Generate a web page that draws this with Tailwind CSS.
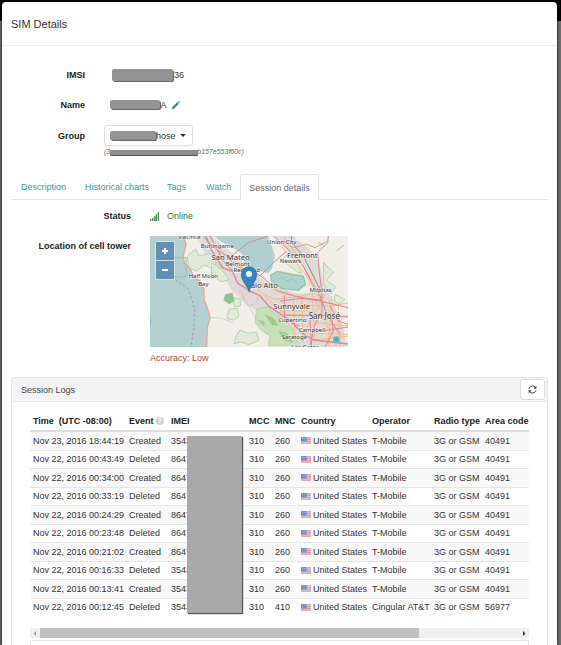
<!DOCTYPE html>
<html lang="en">
<head>
<meta charset="utf-8">
<meta name="viewport" content="width=device-width, initial-scale=1">
<title>SIM Details</title>
<script src="https://cdn.jsdelivr.net/npm/@tailwindcss/browser@4"></script>
</head>
<body class="h-screen overflow-hidden bg-[#666] bg-linear-to-b from-black from-[21px] to-[#6e6e6e] to-[21px] pl-[2px] pr-[4px] pt-[2px] font-['Liberation_Sans',Arial,sans-serif] text-[9px] leading-3 text-[#333]">
<svg class="hidden" aria-hidden="true">
  <symbol id="flag" viewBox="0 0 30 20">
    <rect width="30" height="20" fill="#f4c3c3"/>
    <path d="M0 1.500h30M0 7h30M0 12.500h30M0 18h30" stroke="#ee9091" stroke-width="2.800"/>
    <rect width="17" height="13" fill="#5f8fe6"/>
    <path d="M3 4h2M8 4h2M13 4h2M5 8h2M10 8h2" stroke="#a9c6f7" stroke-width="2"/>
  </symbol>
</svg>
<main role="dialog" aria-labelledby="title" class="flex h-full flex-col rounded-t-[4px] bg-white shadow-[0_0_3px_#000]">
  <header class="flex h-11 shrink-0 items-center border-b border-[#ececec] px-[9px]">
    <h1 id="title" class="text-[11px] leading-4">SIM Details</h1>
  </header>

  <div class="flex flex-1 flex-col px-[9px] pt-[21px]">
    <dl class="grid grid-cols-[74px_1fr] gap-x-[19px]">
      <dt class="flex h-[15px] items-center justify-end font-bold text-[#222]">IMSI</dt>
      <dd class="flex h-[15px] items-center pl-2">
        <span class="z-10 h-3 w-[61px] rounded-[2px] bg-[#939393] shadow-[1px_1px_0_#666]"></span><span class="-ml-[4px]">536</span>
      </dd>
      <dt class="mt-[15px] flex h-[15px] items-center justify-end font-bold text-[#222]">Name</dt>
      <dd class="mt-[15px] flex h-[15px] items-center pl-1.5">
        <span class="z-10 h-[9px] w-[50px] rounded-[2px] bg-[#939393] shadow-[1px_1px_0_#666]"></span><span class="-ml-[2px]">IA</span>
        <button type="button" aria-label="Edit name" class="ml-1">
          <svg class="block size-[10px]" viewBox="0 0 30 30" fill="#2a9cab"><path d="M2 28l2-7L19 6l5 5L9 26z M21 4l3-2 4 4-2 3z"/></svg>
        </button>
      </dd>
      <dt class="mt-[13px] flex h-[21px] items-center justify-end font-bold text-[#222]">Group</dt>
      <dd class="mt-[13px]">
        <button type="button" class="flex h-[21px] w-[89px] items-center rounded-[3px] border border-[#ddd] pl-[5px]">
          <span class="z-10 h-[9px] w-[46px] rounded-[2px] bg-[#939393] shadow-[1px_1px_0_#666]"></span><span class="-ml-[5px]">_</span><span>hose</span>
          <svg class="ml-1 h-[3px] w-[6px]" viewBox="0 0 6 3"><path d="M0 0h6L3 3z" fill="#333"/></svg>
        </button>
        <p class="flex h-3 items-center text-[7px] italic text-[#666]"><span>(3</span><span class="z-10 h-[5px] w-[88px] rounded-[1px] bg-[#8c8c8c] shadow-[0_1px_0_#555]"></span><span class="-ml-px">b157e553f60c)</span></p>
      </dd>
    </dl>

    <nav class="mt-4 flex h-[26px] items-stretch border-b border-[#e4e4e4] pl-px text-[#2a9fa6]">
      <a href="#description" class="mr-px flex items-center px-[9px]">Description</a>
      <a href="#charts" class="flex items-center px-[9px]">Historical charts</a>
      <a href="#tags" class="mr-[2px] flex items-center px-[9px]">Tags</a>
      <a href="#watch" class="flex items-center px-[9px]">Watch</a>
      <a href="#session" aria-current="page" class="-mb-px flex items-center rounded-t-[3px] border border-b-0 border-[#e4e4e4] bg-white px-2 text-[#666]">Session details</a>
    </nav>

    <dl class="grid grid-cols-[120px_1fr] gap-x-[19px] pt-[10px]">
      <dt class="text-right font-bold text-[#222]">Status</dt>
      <dd class="flex items-center text-[#3c763d]">
        <svg class="mr-2 h-[9px] w-[9px]" viewBox="0 0 27 27" fill="#4d8a4e"><path d="M0 22h4v5H0zM6 18h4v9H6zM12 13h4v14h-4zM17 7h4v20h-4zM23 0h4v27h-4z"/></svg>Online
      </dd>
      <dt class="mt-[18px] text-right font-bold text-[#222]">Location of cell tower</dt>
      <dd class="mt-[14px]">
        <div class="relative h-[111px] w-[198px] overflow-hidden">
          <svg class="block h-full w-full" viewBox="0 0 594 333" preserveAspectRatio="xMidYMid slice" role="img" aria-label="Map of the San Francisco Bay Area">
            <rect width="594" height="333" fill="#b5d0d0"/>
            <path d="M102 0L108 25 100 60 103 82 118 95 130 118 150 135 162 160 162 190 172 215 180 245 172 275 170 333H594V0z" fill="#f2efe9"/>
            <!-- urban areas -->
            <path d="M140 0h45l30 25 35 28 48 40 35 35 50 25 60 20 50-5 30-30 30 70 25 60 20 110H470l-25-35-30-40-60-50-60-45-50-45-28-50-40-35z" fill="#dfdad8"/>
            <path d="M375 0h50l50 35 35 50 12 70-30 10-25-60-50-55z" fill="#dfdad8"/>
            <!-- forests and parks -->
            <g fill="#e1ead8" stroke="#aed6b0" stroke-width="3">
              <path d="M112 60l25-22 10 22 35-8 20 25-15 20-25-10-22 18-25-10z"/>
              <path d="M185 80l30 20 22 30-22 8-30-22z"/>
              <path d="M232 240l5-20 25-3 5 23-14 12-22-4z"/>
              <path d="M250 200l5-15 18 5-2 20-18 2z"/>
              <path d="M258 300l12-18 25 10 25-4 6 26-30 12-22-8-22 5z"/>
              <path d="M320 220l30-8 30 25 25 12 22 30 20 50H355l5-30-25-15-20-25z" fill="#c8dfb8"/>
              <path d="M395 70l20-15 25 22 15 35-15-5-25-20z"/>
              <path d="M520 80l30 28-20 25 28 20-15 22-22-30z"/>
              <path d="M555 175l30 15-15 15-18-10z"/>
            </g>
            <path d="M226 175l22-5 5 25-15 10-18-12z" fill="#8dc38c"/>
            <path d="M345 235l25 10 15 25-20-3zM385 285l25 5 20 30-30-8zM325 250l20 8-5 12z" fill="#9ccb8d"/>
            <path d="M58 65h50v58H58z" fill="none" stroke="#8dc3aa" stroke-width="3"/>
            <!-- bay and salt ponds -->
            <path d="M192 0H355l10 30 10 28-8 36-12 18-40-10-32-22-8-28-40-25-22-10z" fill="#b0cfd0"/>
            <path d="M362 118l20-12 38 8 40 6 7 25-22 18-50-6-30-20z" fill="#aed2ce" stroke="#8fc7a4" stroke-width="4"/>
            <path d="M385 130l12-8 10 14 20-8 14 14M505 20l15 8M560 45l22-18" fill="none" stroke="#95c5bb" stroke-width="3"/>
            <!-- minor roads -->
            <g fill="none" stroke="#c4bfbc" stroke-width="2">
              <path d="M180 245l30 0 40 15M270 160l20 40 30 50 35 25"/>
              <path d="M285 175a22 20 0 1 0 1-1M400 0l30 40 35 60 15 50"/>
              <path d="M180 0l40 75 28 30M425 0l0 20 35 40 55 110" stroke="#8f8b8b" stroke-width="3"/>
            </g>
            <!-- secondary roads -->
            <g fill="none" stroke="#f6bd84" stroke-width="3">
              <path d="M180 10l45 45 60 45 45 40 60 30 60 15 110 20M205 55l-10 25 45 25M375 0l30 45 50 55 40 60 30 60 50 90M320 145l10 25 45 20 80-10 60-15M345 180l60 55 95 5 94 0M400 205l150 5 44-10M395 225l80 0 50 15M430 180l5 120M455 180l5 140M485 160l10 160M545 180l-10 150M565 200l5 133M500 260l94 10M450 290l144 5M470 315l124-15M490 180l70 150M525 175l-70 130M410 10l110 180"/>
              <path d="M400 15l30 20 40-10 25 10 35-18" stroke="#cba679"/>
              <path d="M100 0l8 25-8 35 3 22 15 13 12 23 20 17 12 25 0 30 10 25 8 30-8 30-2 58" stroke="#f3a28e" stroke-width="4"/>
            </g>
            <!-- highways -->
            <g fill="none" stroke="#e67f95" stroke-width="3">
              <path d="M160 0l25 30 45 30 25 30 50 15 35 20 45 40 50 15 95 20 64 15"/>
              <path d="M168 0l15 40 35 55 30 12 15 35 40 25 25 10 30 35 60 40 45 45 30 15 101 12" stroke-width="4"/>
              <path d="M250 55l45-35 60-20M330 120l40-40 40-35M370 0l45 40 45 50 25 50 25 40 20 55 40 60"/>
              <path d="M535 0l-2 20-30 30 5 60 8 60 0 60M403 178v70l45 22M390 195l65-8 60 5M405 238h110l79 5M480 250l5 80M515 230l-20 35-15 65M540 210l25 45 29 10M518 285l76-12M545 245l5 40-25 48"/>
            </g>
            <g fill="none" stroke="#a793c0" stroke-width="3" stroke-dasharray="8 6"><path d="M76 132l38 25 20 60-3 60-8 56"/></g>
            <path d="M0 245q6 12 0 24z" fill="#a99bd0"/>
            <circle cx="559" cy="311" r="10" fill="#58bec9"/><circle cx="559" cy="311" r="4" fill="#3c9fb0"/>
            <!-- place names -->
            <g font-family="'Noto Sans', 'Open Sans', sans-serif" fill="#333" stroke="#fff" stroke-opacity=".6" stroke-width="4" paint-order="stroke" text-anchor="middle" font-size="18">
              <text x="119" y="10">Pacifica</text><text x="202" y="35">Burlingame</text>
              <text x="242" y="71" font-size="23">San Mateo</text><text x="263" y="89">Belmont</text>
              <text x="290" y="107">Redwood</text><text x="160" y="126">Half Moon</text><text x="160" y="151">Bay</text>
              <text x="336" y="157" font-size="23">Palo Alto</text><text x="395" y="24">Union City</text>
              <text x="457" y="67" font-size="23">Fremont</text><text x="422" y="82">Newark</text>
              <text x="512" y="168">Milpitas</text><text x="425" y="220" font-size="23">Sunnyvale</text>
              <text x="427" y="257">Cupertino</text><text x="523" y="249" font-size="24">San José</text>
              <text x="486" y="287">Campbell</text><text x="433" y="308">Saratoga</text><text x="466" y="340">Los Gatos</text>
            </g>
            <!-- marker -->
            <path d="M297 167C291 146 274 137 274 115a23 23 0 0 1 46 0C320 137 303 146 297 167z" fill="#3583bf" stroke="#2b6ea5" stroke-width="2"/>
            <circle cx="297" cy="114" r="9" fill="#fff"/>
          </svg>
          <div class="absolute left-[5px] top-[5px] flex flex-col gap-px rounded-[2px] bg-white/40 p-px">
            <button type="button" aria-label="Zoom in" class="grid h-[18px] w-[18px] place-items-center rounded-t-[1px] bg-[#648eb5]"><svg class="size-2" viewBox="0 0 8 8"><path d="M4 1v6M1 4h6" stroke="#fff" stroke-width="2"/></svg></button>
            <button type="button" aria-label="Zoom out" class="grid h-[18px] w-[18px] place-items-center rounded-b-[1px] bg-[#648eb5]"><svg class="size-2" viewBox="0 0 8 8"><path d="M1 4h6" stroke="#fff" stroke-width="2"/></svg></button>
          </div>
        </div>
        <p class="mt-[5px] text-[#b04442]">Accuracy: Low</p>
      </dd>
    </dl>

    <section class="mt-[13px] flex flex-1 flex-col rounded-t-[3px] border border-b-0 border-[#e4e4e4]">
      <header class="flex h-6 items-center justify-between border-b border-[#e4e4e4] bg-[#f4f4f4] pl-[9px] pr-[2px]">
        <h2 class="text-[#444]">Session Logs</h2>
        <button type="button" aria-label="Refresh" class="grid h-[21px] w-[25px] place-items-center rounded-[3px] border border-[#ddd] bg-white">
          <svg class="size-[9px]" viewBox="0 0 27 27" fill="none" stroke="#333" stroke-width="3"><path d="M3 11C5 5 9 3 14 3c4 0 7 2 9 5M24 16c-2 6-6 8-11 8-4 0-7-2-9-5"/><path d="M25 2v9h-9zM2 25v-9h9z" fill="#333" stroke="none"/></svg>
        </button>
      </header>
      <div class="flex flex-1 flex-col px-[18px] pt-[9px]">
        <div class="relative">
          <table class="w-full table-fixed border-collapse whitespace-nowrap text-left">
            <colgroup><col class="w-[96px]"><col class="w-[42px]"><col class="w-[78px]"><col class="w-[26px]"><col class="w-[26px]"><col class="w-[71px]"><col class="w-[62px]"><col class="w-[51px]"><col></colgroup>
            <thead>
              <tr class="h-5 border-b-2 border-[#ddd] text-[#222]">
                <th class="pl-[3px]">Time &nbsp;(UTC -08:00)</th>
                <th class="pl-[3px]"><span class="flex items-center gap-[2px]">Event<span class="grid size-2 place-items-center rounded-full bg-[#d2d2d2] text-[7px] leading-none text-white">?</span></span></th>
                <th class="pl-[3px]">IMEI</th><th class="pl-[3px]">MCC</th><th class="pl-[3px]">MNC</th><th class="pl-[3px]">Country</th><th class="pl-[3px]">Operator</th><th class="pl-[3px]">Radio type</th><th class="pl-[3px]">Area code</th>
              </tr>
            </thead>
            <tbody id="logs"></tbody>
          </table>
          <div class="absolute bottom-[3px] left-[157px] top-[25px] w-[55px] bg-[#a8a8a8] shadow-[1px_1px_1px_#555]"></div>
        </div>
        <div class="mt-3 flex h-[10px] items-center bg-[#f0f0f0]">
          <svg class="h-[5px] w-[10px]" viewBox="0 0 10 5"><path d="M6 0v5L3.500 2.500z" fill="#999"/></svg>
          <div class="h-full w-[76%] bg-[#c0c0c0]"></div>
          <svg class="ml-auto h-[5px] w-[10px]" viewBox="0 0 10 5"><path d="M4 0v5L6.500 2.500z" fill="#333"/></svg>
        </div>
        <div class="mt-[2px] flex-1 border border-b-0 border-[#e8e8e8]"></div>
      </div>
    </section>
  </div>
</main>
<script>
const logs = [
  ["Nov 23, 2016 18:44:19", "Created", "3543", "310", "260", "T-Mobile", "40491"],
  ["Nov 22, 2016 00:43:49", "Deleted", "8647", "310", "260", "T-Mobile", "40491"],
  ["Nov 22, 2016 00:34:00", "Created", "8647", "310", "260", "T-Mobile", "40491"],
  ["Nov 22, 2016 00:33:19", "Deleted", "8647", "310", "260", "T-Mobile", "40491"],
  ["Nov 22, 2016 00:24:29", "Created", "8647", "310", "260", "T-Mobile", "40491"],
  ["Nov 22, 2016 00:23:48", "Deleted", "8647", "310", "260", "T-Mobile", "40491"],
  ["Nov 22, 2016 00:21:02", "Created", "8647", "310", "260", "T-Mobile", "40491"],
  ["Nov 22, 2016 00:16:33", "Deleted", "3543", "310", "260", "T-Mobile", "40491"],
  ["Nov 22, 2016 00:13:41", "Created", "3543", "310", "260", "T-Mobile", "40491"],
  ["Nov 22, 2016 00:12:45", "Deleted", "3543", "310", "410", "Cingular AT&amp;T", "56977"]
];
const cell = (v) => `<td class="pl-[3px]">${v}</td>`;
const country = `<span class="flex items-center gap-[2px]"><svg class="h-[7px] w-[10px]"><use href="#flag"/></svg>United States</span>`;
document.getElementById("logs").innerHTML = logs.map(([time, event, imei, mcc, mnc, operator, area]) =>
  `<tr class="h-[19px] border-t border-[#e6e6e6] odd:bg-[#f9f9f9] even:h-[18px]">${[time, event, imei, mcc, mnc, country, operator, "3G or GSM", area].map(cell).join("")}</tr>`).join("");
</script>
</body>
</html>
